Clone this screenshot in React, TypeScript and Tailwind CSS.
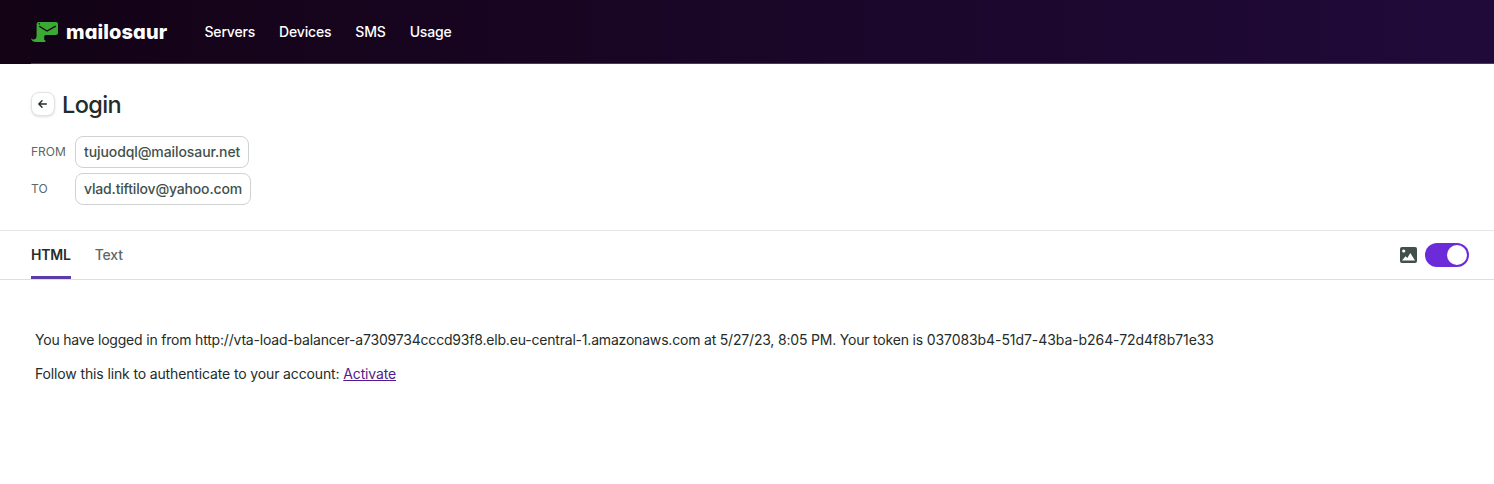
function Logo() {
  return (
    <a className="flex w-[138px] items-center gap-2" aria-label="mailosaur">
      <svg className="h-5 w-[27px] shrink-0" viewBox="0 0 27 20">
        <path
          d="M7.600 0H25a2 2 0 0 1 2 2V10.500a2.500 2.500 0 0 1-2.500 2.500H15c-1.300 0-1.800.8-1.800 2v2.300c0 .8.400 1 1.200 1.200V20H5C2 20 .4 18.400 0 16.200c1.600 1.600 3.400 1.600 4.600.5C5.400 16 5.600 14.700 5.600 13V2a2 2 0 0 1 2-2z"
          fill="#3aaa35"
        />
        <path d="M8.300 4.300 16 9l8.800-4.900" fill="none" stroke="#14041a" strokeWidth="1.300" />
        <circle cx="8.300" cy="1.700" r=".8" fill="#14041a" />
      </svg>
      <span className="text-[20px] leading-6 font-extrabold tracking-[0.1px] text-white [font-feature-settings:'cv11']">
        mailosaur
      </span>
    </a>
  );
}

function AddressRow({ label, address, tracking }: { label: string; address: string; tracking: string }) {
  return (
    <div className="flex items-center">
      <span className="w-11 text-xs text-[#5d6763]">{label}</span>
      <span className={`flex h-8 items-center rounded-lg border border-[#cfd2d1] px-2 text-sm font-medium text-[#42504b] ${tracking}`}>
        {address}
      </span>
    </div>
  );
}

export default function App() {
  return (
    <div className="flex h-[484px] flex-col bg-white font-['Inter',sans-serif] text-[#242c29]">
      <header className="h-16 bg-linear-to-r from-[#130315] to-[#200a3a] pl-[31px]">
        <div className="flex h-16 items-center border-b border-[#493c50]">
          <Logo />
          <nav className="ml-[35.5px] flex gap-6 text-sm font-medium tracking-[-0.18px] text-white">
            <a>Servers</a>
            <a>Devices</a>
            <a>SMS</a>
            <a>Usage</a>
          </nav>
        </div>
      </header>

      <section className="h-[167px] border-b border-[#e5e6e6] px-[31px] pt-6">
        <div className="flex h-8 items-center gap-[7px]">
          <button className="flex size-6 items-center justify-center rounded-lg border border-[#e2e4e3] bg-white pr-px shadow-sm" aria-label="Back">
            <svg className="h-2 w-[9px]" viewBox="0 0 9 8" fill="none" stroke="#242c29" strokeWidth="1.400" strokeLinecap="round" strokeLinejoin="round">
              <path d="M8.300 4H.8M4 .8.800 4 4 7.200" />
            </svg>
          </button>
          <h1 className="pt-0.5 text-[23.5px] font-medium tracking-[-0.6px]">Login</h1>
        </div>
        <div className="mt-4 flex flex-col gap-[5px]">
          <AddressRow label="FROM" address="tujuodql@mailosaur.net" tracking="tracking-[-0.09px]" />
          <AddressRow label="TO" address="vlad.tiftilov@yahoo.com" tracking="tracking-[-0.17px]" />
        </div>
      </section>

      <div className="flex h-[49px] items-center justify-between border-b border-[#dddfde] pr-[25px] pl-[31px] text-sm font-medium">
        <div className="flex h-full gap-6 tracking-[-0.2px]">
          <a className="flex h-full items-center border-b-[3px] border-[#5a3cab] pt-[3px] font-semibold">HTML</a>
          <a className="flex items-center text-[#626765]">Text</a>
        </div>
        <div className="flex items-center gap-2">
          <svg className="h-4 w-[17px]" viewBox="0 0 17 16">
            <rect width="17" height="16" rx="2" fill="#42504b" />
            <circle cx="3.700" cy="4" r="1.600" fill="#fff" />
            <path d="M2 13.500 5.500 9.300 7.300 10.900 10.300 6 15 13.500z" fill="#fff" />
          </svg>
          <div className="flex h-6 w-11 items-center justify-end rounded-full bg-[#6b2bd9] pr-0.5">
            <span className="size-5 rounded-full bg-white" />
          </div>
        </div>
      </div>

      <main className="px-[35px] pt-[50px] text-sm leading-5">
        <p className="tracking-[-0.193px]">
          You have logged in from http://vta-load-balancer-a7309734cccd93f8.elb.eu-central-1.amazonaws.com at 5/27/23, 8:05 PM. Your token is{" "}
          <span className="tracking-[-0.07px]">037083b4-51d7-43ba-b264-72d4f8b71e33</span>
        </p>
        <p className="mt-3.5 tracking-[-0.135px]">
          Follow this link to authenticate to your account: <a className="text-[#551a8b] underline">Activate</a>
        </p>
      </main>
    </div>
  );
}
